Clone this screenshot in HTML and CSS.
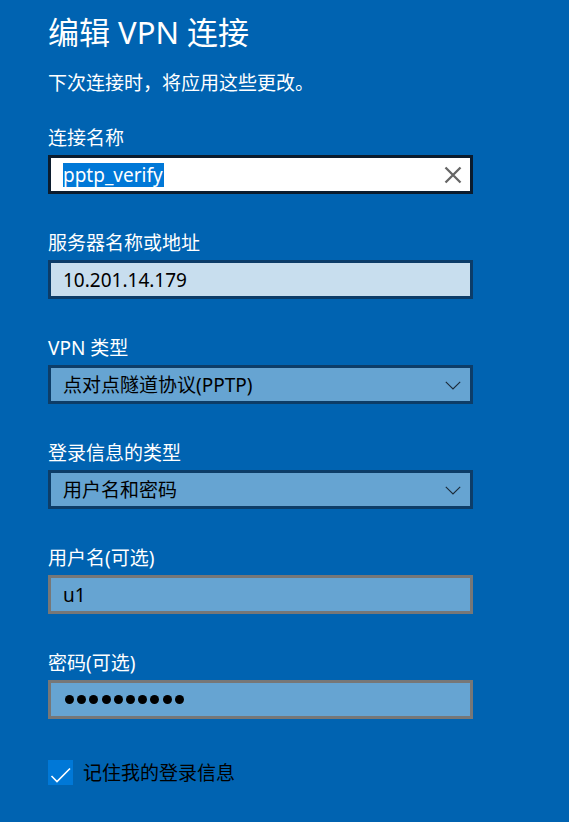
FILE: index.html
```html
<!DOCTYPE html>
<html lang="zh-CN">
<head>
<meta charset="utf-8">
<title>编辑 VPN 连接</title>
<link rel="stylesheet" href="styles.css">
</head>
<body>
<main class="panel">
  <h1 class="title">编辑 VPN 连接</h1>
  <p class="subtitle">下次连接时，将应用这些更改。</p>

  <div class="field">
    <label class="label">连接名称</label>
    <div class="box box-focus">
      <span class="value"><span class="selected">pptp_verify</span></span>
      <svg class="clear" width="18" height="18" viewBox="0 0 18 18" aria-hidden="true">
        <path d="M1.5 1.5 L16.5 16.5 M16.5 1.5 L1.5 16.5" stroke="#666666" stroke-width="2.3" fill="none"/>
      </svg>
    </div>
  </div>

  <div class="field">
    <label class="label">服务器名称或地址</label>
    <div class="box box-light">
      <span class="value">10.201.14.179</span>
    </div>
  </div>

  <div class="field">
    <label class="label">VPN 类型</label>
    <div class="box box-select">
      <span class="value">点对点隧道协议(PPTP)</span>
      <svg class="chevron" width="16" height="9" viewBox="0 0 16 9" aria-hidden="true">
        <path d="M0.8 0.8 L8 8 L15.2 0.8" stroke="#1c2a38" stroke-width="1.1" fill="none"/>
      </svg>
    </div>
  </div>

  <div class="field">
    <label class="label">登录信息的类型</label>
    <div class="box box-select">
      <span class="value">用户名和密码</span>
      <svg class="chevron" width="16" height="9" viewBox="0 0 16 9" aria-hidden="true">
        <path d="M0.8 0.8 L8 8 L15.2 0.8" stroke="#1c2a38" stroke-width="1.1" fill="none"/>
      </svg>
    </div>
  </div>

  <div class="field">
    <label class="label">用户名(可选)</label>
    <div class="box box-grey">
      <span class="value">u1</span>
    </div>
  </div>

  <div class="field">
    <label class="label">密码(可选)</label>
    <div class="box box-grey">
      <span class="dots"><i class="dot"></i><i class="dot"></i><i class="dot"></i><i class="dot"></i><i class="dot"></i><i class="dot"></i><i class="dot"></i><i class="dot"></i><i class="dot"></i><i class="dot"></i></span>
    </div>
  </div>

  <div class="check-row">
    <span class="checkbox">
      <svg width="25" height="25" viewBox="0 0 25 25" aria-hidden="true">
        <path d="M3.5 16 L9 21.5 L22 8.5" stroke="#ffffff" stroke-width="1.6" fill="none"/>
      </svg>
    </span>
    <span class="check-label">记住我的登录信息</span>
  </div>
</main>
</body>
</html>
```
FILE: styles.css
```css
html, body {
  margin: 0;
  padding: 0;
}

body {
  background: #0063b1;
  font-family: "Noto Sans", "Noto Sans CJK SC", sans-serif;
  color: #ffffff;
  width: 569px;
  height: 822px;
  overflow: hidden;
}

.panel {
  padding: 12px 0 0 48px;
  width: 425px;
}

.title {
  margin: 0;
  font-size: 31px;
  font-weight: 400;
  line-height: 40px;
}

.subtitle {
  margin: 19px 0 0;
  font-size: 19px;
  line-height: 24px;
}

.field {
  display: flex;
  flex-direction: column;
  gap: 5px;
  margin-top: 31px;
}

.field + .field {
  margin-top: 37px;
}

.label {
  font-size: 19px;
  line-height: 24px;
}

.box {
  box-sizing: border-box;
  height: 39px;
  border: 3px solid #0c3c68;
  display: flex;
  align-items: center;
  padding: 0 9px 0 12px;
  color: #000000;
  font-size: 19px;
}

.value {
  flex: 1;
  line-height: 24px;
  white-space: nowrap;
}

.box-focus {
  background: #ffffff;
  border-color: #0b1c2e;
  padding-right: 8px;
}

.selected {
  display: inline-block;
  background: #0078d7;
  color: #ffffff;
  line-height: 24px;
  padding-right: 1px;
}

.box-light {
  background: #c8deee;
}

.box-select {
  background: #66a4d2;
  border-color: #0d3d68;
}

.box-grey {
  background: #66a4d2;
  border-color: #777777;
}

.clear,
.chevron {
  flex: none;
  display: block;
}

.chevron {
  margin-top: 1px;
}

.dots {
  display: flex;
  gap: 3.2px;
  padding-left: 2px;
}

.dot {
  display: block;
  width: 9px;
  height: 9px;
  border-radius: 50%;
  background: #000000;
}

.check-row {
  display: flex;
  align-items: center;
  gap: 10px;
  margin-top: 41px;
}

.checkbox {
  width: 25px;
  height: 25px;
  background: #0078d7;
  display: block;
}

.checkbox svg {
  display: block;
}

.check-label {
  color: #000000;
  font-size: 19px;
  line-height: 24px;
}
```
